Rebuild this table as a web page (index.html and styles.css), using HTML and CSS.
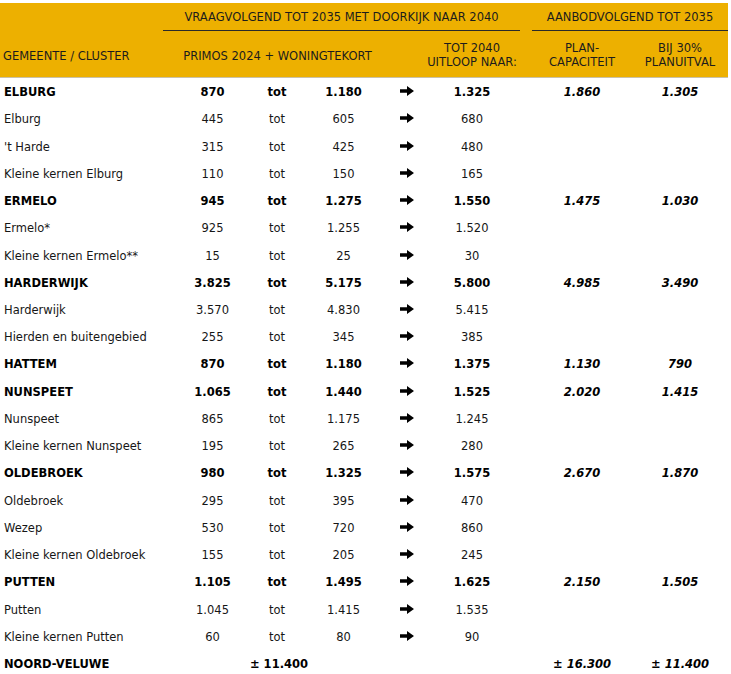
FILE: index.html
```html
<!DOCTYPE html>
<html lang="nl">
<head>
<meta charset="utf-8">
<title>Woningbouwopgave Noord-Veluwe</title>
<link rel="stylesheet" href="styles.css">
</head>
<body>
<svg width="0" height="0" class="defs" aria-hidden="true">
  <symbol id="arr" viewBox="0 0 14 10"><path d="M0 3.2 H7 V0 L14 5 L7 10 V6.8 H0 Z" fill="#000"/></symbol>
</svg>
<table class="grid">
  <colgroup>
    <col class="c-name"><col class="c-from"><col class="c-tot"><col class="c-to"><col class="c-arr"><col class="c-2040"><col class="c-sp"><col class="c-plan"><col class="c-30">
  </colgroup>
  <thead>
    <tr class="h1">
      <th></th>
      <th colspan="5" class="grp">VRAAGVOLGEND TOT 2035 MET DOORKIJK NAAR 2040</th>
      <th></th>
      <th colspan="2" class="grp">AANBODVOLGEND TOT 2035</th>
    </tr>
    <tr class="h2">
      <th class="name">GEMEENTE / CLUSTER</th>
      <th colspan="3" class="primos">PRIMOS 2024 + WONINGTEKORT</th>
      <th colspan="2" class="t2040">TOT 2040<br>UITLOOP NAAR:</th>
      <th></th>
      <th>PLAN-<br>CAPACITEIT</th>
      <th>BIJ 30%<br>PLANUITVAL</th>
    </tr>
  </thead>
  <tbody>
    <tr class="b"><td class="name">ELBURG</td><td class="from">870</td><td>tot</td><td>1.180</td><td><svg class="arrow"><use href="#arr"/></svg></td><td class="n2040">1.325</td><td></td><td class="it">1.860</td><td class="it">1.305</td></tr>
    <tr><td class="name">Elburg</td><td class="from">445</td><td>tot</td><td>605</td><td><svg class="arrow"><use href="#arr"/></svg></td><td class="n2040">680</td><td></td><td></td><td></td></tr>
    <tr><td class="name">'t Harde</td><td class="from">315</td><td>tot</td><td>425</td><td><svg class="arrow"><use href="#arr"/></svg></td><td class="n2040">480</td><td></td><td></td><td></td></tr>
    <tr><td class="name">Kleine kernen Elburg</td><td class="from">110</td><td>tot</td><td>150</td><td><svg class="arrow"><use href="#arr"/></svg></td><td class="n2040">165</td><td></td><td></td><td></td></tr>
    <tr class="b"><td class="name">ERMELO</td><td class="from">945</td><td>tot</td><td>1.275</td><td><svg class="arrow"><use href="#arr"/></svg></td><td class="n2040">1.550</td><td></td><td class="it">1.475</td><td class="it">1.030</td></tr>
    <tr><td class="name">Ermelo*</td><td class="from">925</td><td>tot</td><td>1.255</td><td><svg class="arrow"><use href="#arr"/></svg></td><td class="n2040">1.520</td><td></td><td></td><td></td></tr>
    <tr><td class="name">Kleine kernen Ermelo**</td><td class="from">15</td><td>tot</td><td>25</td><td><svg class="arrow"><use href="#arr"/></svg></td><td class="n2040">30</td><td></td><td></td><td></td></tr>
    <tr class="b"><td class="name">HARDERWIJK</td><td class="from">3.825</td><td>tot</td><td>5.175</td><td><svg class="arrow"><use href="#arr"/></svg></td><td class="n2040">5.800</td><td></td><td class="it">4.985</td><td class="it">3.490</td></tr>
    <tr><td class="name">Harderwijk</td><td class="from">3.570</td><td>tot</td><td>4.830</td><td><svg class="arrow"><use href="#arr"/></svg></td><td class="n2040">5.415</td><td></td><td></td><td></td></tr>
    <tr><td class="name">Hierden en buitengebied</td><td class="from">255</td><td>tot</td><td>345</td><td><svg class="arrow"><use href="#arr"/></svg></td><td class="n2040">385</td><td></td><td></td><td></td></tr>
    <tr class="b"><td class="name">HATTEM</td><td class="from">870</td><td>tot</td><td>1.180</td><td><svg class="arrow"><use href="#arr"/></svg></td><td class="n2040">1.375</td><td></td><td class="it">1.130</td><td class="it">790</td></tr>
    <tr class="b"><td class="name">NUNSPEET</td><td class="from">1.065</td><td>tot</td><td>1.440</td><td><svg class="arrow"><use href="#arr"/></svg></td><td class="n2040">1.525</td><td></td><td class="it">2.020</td><td class="it">1.415</td></tr>
    <tr><td class="name">Nunspeet</td><td class="from">865</td><td>tot</td><td>1.175</td><td><svg class="arrow"><use href="#arr"/></svg></td><td class="n2040">1.245</td><td></td><td></td><td></td></tr>
    <tr><td class="name">Kleine kernen Nunspeet</td><td class="from">195</td><td>tot</td><td>265</td><td><svg class="arrow"><use href="#arr"/></svg></td><td class="n2040">280</td><td></td><td></td><td></td></tr>
    <tr class="b"><td class="name">OLDEBROEK</td><td class="from">980</td><td>tot</td><td>1.325</td><td><svg class="arrow"><use href="#arr"/></svg></td><td class="n2040">1.575</td><td></td><td class="it">2.670</td><td class="it">1.870</td></tr>
    <tr><td class="name">Oldebroek</td><td class="from">295</td><td>tot</td><td>395</td><td><svg class="arrow"><use href="#arr"/></svg></td><td class="n2040">470</td><td></td><td></td><td></td></tr>
    <tr><td class="name">Wezep</td><td class="from">530</td><td>tot</td><td>720</td><td><svg class="arrow"><use href="#arr"/></svg></td><td class="n2040">860</td><td></td><td></td><td></td></tr>
    <tr><td class="name">Kleine kernen Oldebroek</td><td class="from">155</td><td>tot</td><td>205</td><td><svg class="arrow"><use href="#arr"/></svg></td><td class="n2040">245</td><td></td><td></td><td></td></tr>
    <tr class="b"><td class="name">PUTTEN</td><td class="from">1.105</td><td>tot</td><td>1.495</td><td><svg class="arrow"><use href="#arr"/></svg></td><td class="n2040">1.625</td><td></td><td class="it">2.150</td><td class="it">1.505</td></tr>
    <tr><td class="name">Putten</td><td class="from">1.045</td><td>tot</td><td>1.415</td><td><svg class="arrow"><use href="#arr"/></svg></td><td class="n2040">1.535</td><td></td><td></td><td></td></tr>
    <tr><td class="name">Kleine kernen Putten</td><td class="from">60</td><td>tot</td><td>80</td><td><svg class="arrow"><use href="#arr"/></svg></td><td class="n2040">90</td><td></td><td></td><td></td></tr>
    <tr class="b"><td class="name">NOORD-VELUWE</td><td colspan="3" class="total">± 11.400</td><td></td><td></td><td></td><td class="it">± 16.300</td><td class="it">± 11.400</td></tr>
  </tbody>
</table>
</body>
</html>
```

FILE: styles.css
```css
html, body {
  margin: 0;
  padding: 0;
  background: #ffffff;
}
body {
  padding-top: 3px;
  font-family: "DejaVu Sans", Verdana, sans-serif;
  font-size: 11.5px;
  color: #141414;
}
.defs {
  position: absolute;
  width: 0;
  height: 0;
}
.grid {
  table-layout: fixed;
  width: 728px;
  border-collapse: collapse;
  border-spacing: 0;
}
.c-name { width: 163px; }
.c-from { width: 84px; }
.c-tot { width: 60px; }
.c-to { width: 73px; }
.c-arr { width: 54px; }
.c-2040 { width: 86px; }
.c-sp { width: 12px; }
.c-plan { width: 100px; }
.c-30 { width: 96px; }

thead th {
  background: #edb000;
  font-weight: normal;
  color: #1c1c1c;
  padding: 0;
  text-align: center;
  white-space: nowrap;
  line-height: 14px;
}
.h1 th {
  height: 27px;
  vertical-align: middle;
}
.h1 .grp {
  border-bottom: 1px solid #2a2a2a;
}
.h2 th {
  height: 41px;
  vertical-align: middle;
  padding-top: 3px;
  border-bottom: 1px solid #c9c1a8;
}
.h2 .name {
  text-align: left;
  padding-left: 3px;
  padding-top: 5px;
}
.h2 .primos {
  padding-left: 12px;
  padding-top: 4px;
}
.h2 .t2040 {
  padding-left: 44px;
}

tbody td {
  box-sizing: border-box;
  height: 27.24px;
  padding: 3px 0 0 0;
  text-align: center;
  vertical-align: middle;
  white-space: nowrap;
  color: #161616;
}
tbody .name {
  text-align: left;
  padding-left: 4px;
}
tbody .from {
  padding-left: 15px;
}
tbody .n2040 {
  padding-right: 10px;
}
tbody .total {
  padding-left: 15px;
}
tbody tr.b td {
  font-weight: bold;
  color: #000;
}
tbody td.it {
  font-style: italic;
}
.arrow {
  display: block;
  width: 14px;
  height: 10px;
  margin: 0 auto;
  position: relative;
  top: -1px;
}
```
